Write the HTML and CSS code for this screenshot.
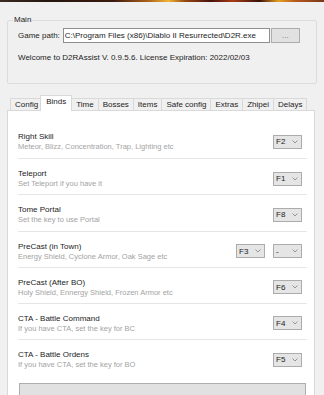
FILE: index.html
```html
<!DOCTYPE html>
<html lang="en">
<head>
    <meta charset="UTF-8">
    <title>D2RAssist</title>
    <link rel="stylesheet" href="styles.css">
</head>
<body>
    <div class="banner"></div>

    <fieldset class="main-group">
        <legend>Main</legend>
        <div class="path-row">
            <label for="gamePath">Game path:</label>
            <input type="text" id="gamePath" value="C:\Program Files (x86)\Diablo II Resurrected\D2R.exe">
            <button class="browse">...</button>
        </div>
        <p class="license">Welcome to D2RAssist V. 0.9.5.6. License Expiration: 2022/02/03</p>
    </fieldset>

    <div class="tabs">
        <div class="tab">Config</div>
        <div class="tab ativo">Binds</div>
        <div class="tab">Time</div>
        <div class="tab">Bosses</div>
        <div class="tab">Items</div>
        <div class="tab">Safe config</div>
        <div class="tab">Extras</div>
        <div class="tab">Zhipei</div>
        <div class="tab">Delays</div>
    </div>

    <div class="tab-panel">
        <div class="bind-row">
            <div class="bind-info">
                <div class="bind-title">Right Skill</div>
                <div class="bind-desc">Meteor, Blizz, Concentration, Trap, Lighting etc</div>
            </div>
            <div class="combo"><span>F2</span><svg viewBox="0 0 6 4"><path d="M0.5 0.5 L3 3 L5.5 0.5"/></svg></div>
        </div>
        <div class="bind-row">
            <div class="bind-info">
                <div class="bind-title">Teleport</div>
                <div class="bind-desc">Set Teleport if you have it</div>
            </div>
            <div class="combo"><span>F1</span><svg viewBox="0 0 6 4"><path d="M0.5 0.5 L3 3 L5.5 0.5"/></svg></div>
        </div>
        <div class="bind-row">
            <div class="bind-info">
                <div class="bind-title">Tome Portal</div>
                <div class="bind-desc">Set the key to use Portal</div>
            </div>
            <div class="combo"><span>F8</span><svg viewBox="0 0 6 4"><path d="M0.5 0.5 L3 3 L5.5 0.5"/></svg></div>
        </div>
        <div class="bind-row">
            <div class="bind-info">
                <div class="bind-title">PreCast (in Town)</div>
                <div class="bind-desc">Energy Shield, Cyclone Armor, Oak Sage etc</div>
            </div>
            <div class="combo"><span>F3</span><svg viewBox="0 0 6 4"><path d="M0.5 0.5 L3 3 L5.5 0.5"/></svg></div>
            <div class="combo"><span>-</span><svg viewBox="0 0 6 4"><path d="M0.5 0.5 L3 3 L5.5 0.5"/></svg></div>
        </div>
        <div class="bind-row">
            <div class="bind-info">
                <div class="bind-title">PreCast (After BO)</div>
                <div class="bind-desc">Holy Shield, Ennergy Shield, Frozen Armor etc</div>
            </div>
            <div class="combo"><span>F6</span><svg viewBox="0 0 6 4"><path d="M0.5 0.5 L3 3 L5.5 0.5"/></svg></div>
        </div>
        <div class="bind-row">
            <div class="bind-info">
                <div class="bind-title">CTA - Battle Command</div>
                <div class="bind-desc">If you have CTA, set the key for BC</div>
            </div>
            <div class="combo"><span>F4</span><svg viewBox="0 0 6 4"><path d="M0.5 0.5 L3 3 L5.5 0.5"/></svg></div>
        </div>
        <div class="bind-row">
            <div class="bind-info">
                <div class="bind-title">CTA - Battle Ordens</div>
                <div class="bind-desc">If you have CTA, set the key for BO</div>
            </div>
            <div class="combo"><span>F5</span><svg viewBox="0 0 6 4"><path d="M0.5 0.5 L3 3 L5.5 0.5"/></svg></div>
        </div>
        <button class="save-btn"></button>
    </div>
</body>
</html>
```

FILE: styles.css
```css
html, body {
    height: 395px;
    overflow: hidden;
}

body {
    margin: 0;
    font-family: "Liberation Sans", Arial, sans-serif;
    font-size: 8px;
    color: #1c1c1c;
    background-color: #f0f0f0;
}

.banner {
    height: 2px;
    background: linear-gradient(90deg, #3a2a20 0%, #24150f 15%, #3c1a0e 35%, #b0641a 46%, #f2b534 52%, #9a4a12 57%, #4a120c 65%, #a83c16 72%, #3a1008 80%, #e8a020 86%, #b85a1c 91%, #7a3818 100%);
}

.main-group {
    margin: 13px 7px 0 7px;
    padding: 3px 8px 20px 10px;
    border: 1px solid #dcdcdc;
    border-radius: 2px;
}

.main-group legend {
    margin-left: -5px;
    padding: 0 1px;
    line-height: 10px;
}

.path-row {
    display: flex;
    align-items: center;
}

.path-row label {
    margin-right: 3px;
}

.path-row input {
    width: 207px;
    height: 15px;
    box-sizing: border-box;
    margin: 0;
    padding: 0 1px;
    font: inherit;
    color: #1c1c1c;
    border: 1px solid #8f8f8f;
    background-color: #fff;
    outline: none;
}

.browse {
    width: 29px;
    height: 15px;
    margin: 0 0 0 1px;
    padding: 0;
    font: inherit;
    color: #777;
    background-color: #e1e1e1;
    border: 1px solid #adadad;
}

.license {
    margin: 10px 0 0 0;
    line-height: 10px;
}

.tabs {
    display: flex;
    align-items: flex-end;
    height: 15px;
    margin: 11px 0 0 7px;
    padding-left: 3px;
}

.tab {
    height: 12px;
    box-sizing: border-box;
    padding: 0 4px;
    margin-right: -1px;
    line-height: 11px;
    border: 1px solid #d9d9d9;
    border-bottom: none;
    background-color: #f0f0f0;
}

.tab.ativo {
    position: relative;
    z-index: 1;
    height: 16px;
    margin: 0 -1px -1px -2px;
    padding: 0 5px;
    background-color: #fff;
}

.tab-panel {
    margin: 0 9px 0 7px;
    padding: 11px 7px 0 10px;
    height: 300px;
    border: 1px solid #d9d9d9;
    background-color: #fff;
}

.bind-row {
    display: flex;
    align-items: center;
    gap: 8px;
    padding: 10px 5px 6.2px 0;
    border-bottom: 1px solid #e6e6e6;
}

.bind-row:first-child {
    padding-bottom: 7.2px;
}

.bind-row:last-of-type {
    border-bottom: none;
}

.bind-info {
    flex: 1;
}

.bind-title {
    line-height: 10px;
    color: #1c1c1c;
}

.bind-desc {
    font-size: 7.5px;
    line-height: 9px;
    color: #a3a3a3;
}

.combo {
    display: flex;
    align-items: center;
    justify-content: space-between;
    width: 29px;
    height: 14px;
    box-sizing: border-box;
    padding: 0 3px 0 2px;
    border: 1px solid #acacac;
    background-color: #e5e5e5;
    color: #1c1c1c;
}

.combo svg {
    width: 6px;
    height: 4px;
    fill: none;
    stroke: #808080;
    stroke-width: 0.8;
}

.save-btn {
    display: block;
    width: calc(100% - 2px);
    height: 22px;
    margin: 8px 1px 0;
    font: inherit;
    background-color: #e1e1e1;
    border: 1px solid #adadad;
}
```
